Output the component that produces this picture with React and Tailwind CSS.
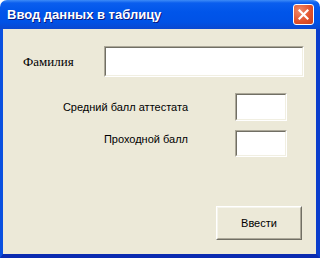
export default function App() {
  return (
    <div className="w-[320px] h-[258px] bg-white">
      <div className="w-[320px] h-[258px] flex flex-col rounded-t-[7px] overflow-hidden">
        <div className="h-[29px] shrink-0 flex items-center justify-between pl-[7px] pr-[6px] bg-[linear-gradient(to_bottom,#3D8BF7_0px,#0A5EEE_3px,#0055EA_12px,#0052E6_22px,#0A48D0_29px)]">
          <span className="text-white font-bold text-[13px] leading-none [text-shadow:1px_1px_#0A1A80] [font-family:'Liberation_Sans',sans-serif]">
            Ввод данных в таблицу
          </span>
          <div className="w-[21px] h-[21px] rounded-[3px] border border-white bg-[radial-gradient(circle_at_30%_30%,#F08A6A,#E0502A_60%,#C8401E)] flex items-center justify-center">
            <svg width="11" height="11" viewBox="0 0 11 11">
              <path d="M1.5 1.5 L9.5 9.5 M9.5 1.5 L1.5 9.5" stroke="white" strokeWidth="2.2" strokeLinecap="square" />
            </svg>
          </div>
        </div>
        <div className="flex-1 flex flex-col bg-[#ECE9D8] border-l-[3px] border-r-[4px] border-b-[4px] border-l-[#0A50E0] border-r-[#0A3DCC] border-b-[#0A2BB0] pl-[20px]">
          <div className="mt-[17px] flex items-center">
            <span className="w-[81px] text-[13px] text-black [font-family:'Liberation_Serif',serif]">Фамилия</span>
            <Field w="w-[200px]" h="h-[31px]" />
          </div>
          <div className="mt-[16px] flex items-center justify-end gap-[47px] pr-[29px]">
            <span className="text-[11px] text-black [font-family:'Liberation_Sans',sans-serif]">Средний балл аттестата</span>
            <Field w="w-[52px]" h="h-[28px]" />
          </div>
          <div className="mt-[9px] flex items-start justify-end gap-[47px] pr-[29px]">
            <span className="text-[11px] mt-[1px] text-black [font-family:'Liberation_Sans',sans-serif]">Проходной балл</span>
            <Field w="w-[52px]" h="h-[27px]" />
          </div>
          <div className="mt-auto mb-[14px] pr-[14px] flex justify-end">
            <div className="w-[86px] h-[34px] border border-t-white border-l-white border-r-[#716F64] border-b-[#716F64]">
              <div className="w-full h-full border border-t-[#F5F4EC] border-l-[#F5F4EC] border-r-[#ACA899] border-b-[#ACA899] flex items-center justify-center text-[11px] text-black [font-family:'Liberation_Sans',sans-serif]">
                Ввести
              </div>
            </div>
          </div>
        </div>
      </div>
    </div>
  );
}

function Field({ w, h }) {
  return (
    <div className={`${w} ${h} border border-t-[#ACA899] border-l-[#ACA899] border-r-white border-b-white`}>
      <div className="w-full h-full bg-white border border-t-[#716F64] border-l-[#716F64] border-r-[#F1EFE2] border-b-[#F1EFE2]" />
    </div>
  );
}
